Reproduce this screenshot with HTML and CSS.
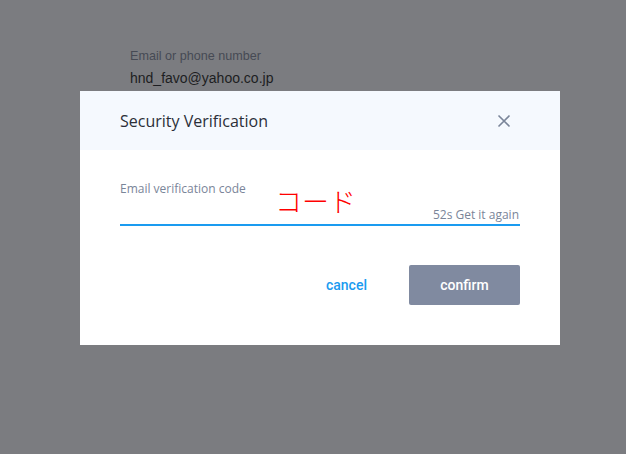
FILE: index.html
```html
<!DOCTYPE html>
<html lang="en">
<head>
  <meta charset="UTF-8">
  <meta name="viewport" content="width=device-width, initial-scale=1.0">
  <title>Security Verification</title>
  <link rel="stylesheet" href="styles.css">
</head>
<body>
  <!-- Page behind the dialog -->
  <div class="page">
    <div class="field-label">Email or phone number</div>
    <div class="field-value">hnd_favo@yahoo.co.jp</div>
  </div>

  <!-- Dialog -->
  <div class="overlay">
    <div class="modal">
      <div class="modal-header">
        <h3>Security Verification</h3>
        <button class="close" aria-label="close">
          <svg width="14" height="14" viewBox="0 0 14 14">
            <path d="M1.5 1.5 L12.5 12.5 M12.5 1.5 L1.5 12.5" stroke="#7a8599" stroke-width="1.6" fill="none"/>
          </svg>
        </button>
      </div>

      <div class="modal-body">
        <label for="code">Email verification code</label>
        <div class="code-row">
          <input type="text" id="code">
          <span class="resend">52s Get it again</span>
          <span class="note">コード</span>
        </div>
      </div>

      <div class="modal-footer">
        <button class="btn-cancel">cancel</button>
        <button class="btn-confirm">confirm</button>
      </div>
    </div>
  </div>
</body>
</html>
```

FILE: styles.css
```css
* {
  margin: 0;
  padding: 0;
  box-sizing: border-box;
}

body {
  font-family: "Open Sans", Arial, sans-serif;
  background-color: #7b7c80;
  width: 626px;
  height: 454px;
  overflow: hidden;
}

.page {
  padding: 48px 0 0 130px;
}

.field-label {
  font-family: "Liberation Sans", Arial, sans-serif;
  font-size: 12.6px;
  color: #464a54;
  line-height: 16px;
}

.field-value {
  font-family: "Liberation Sans", Arial, sans-serif;
  font-size: 14px;
  color: #1d1e22;
  line-height: 18px;
  margin-top: 5px;
}

.overlay {
  position: fixed;
  top: 0;
  left: 0;
  right: 0;
  bottom: 0;
  padding: 91px 0 0 80px;
}

.modal {
  width: 480px;
  height: 254px;
  background-color: #fff;
  display: flex;
  flex-direction: column;
}

.modal-header {
  height: 59px;
  background-color: #f5f9fe;
  display: flex;
  align-items: center;
  justify-content: space-between;
  padding: 0 49px 0 40px;
}

.modal-header h3 {
  font-size: 16px;
  font-weight: 400;
  color: #2b2f38;
}

.close {
  border: none;
  background: none;
  display: flex;
  cursor: pointer;
}

.modal-body {
  padding: 31px 40px 0;
}

label {
  display: block;
  font-size: 12px;
  color: #7a8599;
  line-height: 16px;
}

.code-row {
  position: relative;
  display: flex;
  align-items: center;
  border-bottom: 2px solid #1a9bf0;
  height: 29px;
}

.code-row input {
  flex: 1;
  border: none;
  outline: none;
  background: none;
  font-size: 14px;
}

.resend {
  font-size: 12px;
  color: #7a8599;
  margin-top: 8px;
  margin-right: 1px;
}

.note {
  position: absolute;
  left: 155px;
  top: -12px;
  font-family: "Noto Sans CJK JP", sans-serif;
  font-size: 27px;
  font-weight: 300;
  color: #ff0000;
  line-height: 32px;
}

.modal-footer {
  display: flex;
  justify-content: flex-end;
  align-items: center;
  gap: 42px;
  padding: 39px 40px 0;
}

.btn-cancel {
  border: none;
  background: none;
  font-family: Roboto, Arial, sans-serif;
  font-weight: 500;
  font-size: 14px;
  color: #1a9bf0;
  cursor: pointer;
}

.btn-confirm {
  width: 111px;
  height: 40px;
  border: none;
  border-radius: 2px;
  background-color: #808aa0;
  color: #fff;
  font-family: Roboto, Arial, sans-serif;
  font-weight: 500;
  font-size: 14px;
  cursor: pointer;
}
```
